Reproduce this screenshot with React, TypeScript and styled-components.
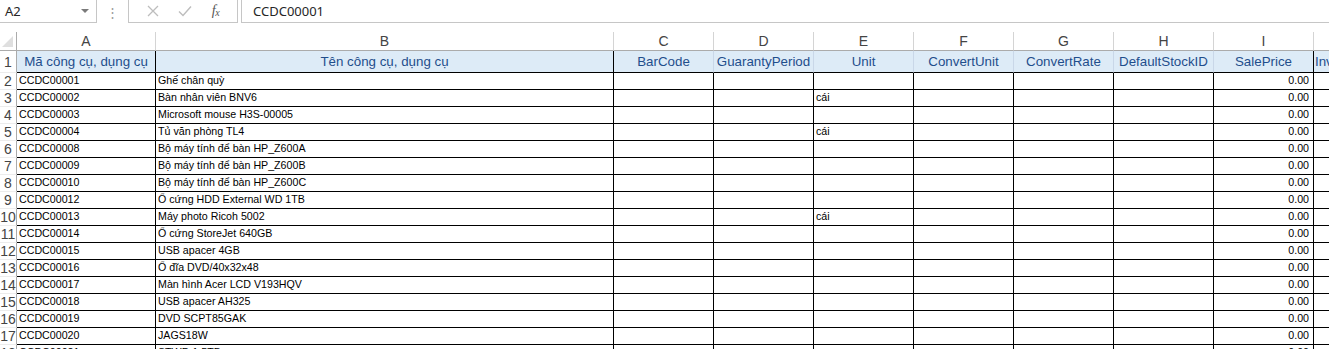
import React from "react";
import styled, { createGlobalStyle } from "styled-components";

const GlobalStyle = createGlobalStyle`
  html, body {
    margin: 0;
    padding: 0;
    background: #ffffff;
    overflow: hidden;
  }
  #root {
    width: 1329px;
    height: 349px;
    overflow: hidden;
  }
`;

const columns = ["A", "B", "C", "D", "E", "F", "G", "H", "I", "J"];
const headers = [
  "Mã công cụ, dụng cụ",
  "Tên công cụ, dụng cụ",
  "BarCode",
  "GuarantyPeriod",
  "Unit",
  "ConvertUnit",
  "ConvertRate",
  "DefaultStockID",
  "SalePrice",
  "InventoryAccount",
];

const rows: [string, string, string][] = [
  ["CCDC00001", "Ghế chân quỳ", ""],
  ["CCDC00002", "Bàn nhân viên BNV6", "cái"],
  ["CCDC00003", "Microsoft mouse H3S-00005", ""],
  ["CCDC00004", "Tủ văn phòng TL4", "cái"],
  ["CCDC00008", "Bộ máy tính để bàn HP_Z600A", ""],
  ["CCDC00009", "Bộ máy tính để bàn HP_Z600B", ""],
  ["CCDC00010", "Bộ máy tính để bàn HP_Z600C", ""],
  ["CCDC00012", "Ổ cứng HDD External WD 1TB", ""],
  ["CCDC00013", "Máy photo Ricoh 5002", "cái"],
  ["CCDC00014", "Ổ cứng StoreJet 640GB", ""],
  ["CCDC00015", "USB apacer 4GB", ""],
  ["CCDC00016", "Ổ đĩa DVD/40x32x48", ""],
  ["CCDC00017", "Màn hình Acer LCD V193HQV", ""],
  ["CCDC00018", "USB apacer AH325", ""],
  ["CCDC00019", "DVD SCPT85GAK", ""],
  ["CCDC00020", "JAGS18W", ""],
  ["CCDC00021", "STWD 1.5TB", ""],
];

const Page = styled.div`
  display: flex;
  flex-direction: column;
  gap: 9px;
  width: 1329px;
`;

const FormulaBar = styled.div`
  display: flex;
  align-items: stretch;
  height: 23px;
  font-family: "Noto Sans", "Open Sans", sans-serif;
  font-size: 13px;
  color: #262626;
`;

const NameBox = styled.div`
  width: 97px;
  display: flex;
  align-items: center;
  justify-content: space-between;
  padding: 0 6px 0 5px;
  box-sizing: border-box;
  border-right: 1px solid #c6c6c6;
  border-bottom: 1px solid #c6c6c6;
`;

const Caret = styled.span`
  width: 0;
  height: 0;
  border-left: 4px solid transparent;
  border-right: 4px solid transparent;
  border-top: 4px solid #7a7a7a;
  margin-right: 1px;
`;

const Dots = styled.div`
  width: 31px;
  display: flex;
  align-items: center;
  justify-content: center;
  color: #9a9a9a;
  font-size: 13px;
`;

const IconBox = styled.div`
  width: 110px;
  display: flex;
  align-items: center;
  justify-content: space-around;
  padding: 0 8px;
  box-sizing: border-box;
  border-left: 1px solid #c6c6c6;
  border-right: 1px solid #c6c6c6;
  border-bottom: 1px solid #c6c6c6;
`;

const Fx = styled.span`
  font-family: "Liberation Serif", "DejaVu Serif", serif;
  font-style: italic;
  font-size: 14px;
  color: #555;
  letter-spacing: -0.5px;
  sub {
    font-size: 10px;
    vertical-align: -1px;
  }
`;

const FormulaInput = styled.div`
  flex: 1;
  margin-left: 3px;
  display: flex;
  align-items: center;
  padding-left: 11px;
  border-left: 1px solid #c6c6c6;
  border-bottom: 1px solid #c6c6c6;
`;

const Sheet = styled.div`
  display: grid;
  grid-template-columns: 17px 139px 458px repeat(8, 100px);
  grid-template-rows: 19px 22px;
  grid-auto-rows: 17px;
  font-family: "Liberation Sans", Arial, sans-serif;
`;

const Corner = styled.div`
  position: relative;
  border-right: 1px solid #ababab;
  border-bottom: 1px solid #ababab;
  &::after {
    content: "";
    position: absolute;
    right: 3px;
    bottom: 3px;
    width: 0;
    height: 0;
    border-left: 11px solid transparent;
    border-bottom: 11px solid #dfdfdf;
  }
`;

const ColHead = styled.div`
  display: flex;
  align-items: center;
  justify-content: center;
  font-size: 14px;
  color: #444;
  border-right: 1px solid #d4d4d4;
  border-bottom: 1px solid #ababab;
  white-space: nowrap;
  overflow: hidden;
`;

const RowHead = styled.div`
  display: flex;
  align-items: center;
  justify-content: center;
  font-size: 14px;
  color: #444;
  border-right: 1px solid #ababab;
  border-bottom: 1px solid #ececec;
  overflow: hidden;
`;

const TitleCell = styled.div<{ $strong?: boolean; $left?: boolean }>`
  display: flex;
  align-items: center;
  justify-content: ${(p) => (p.$left ? "flex-start" : "center")};
  padding-left: ${(p) => (p.$left ? "1px" : "0")};
  background: #ddebf7;
  color: #1f4e8c;
  font-size: 13.33px;
  border-right: 1px solid ${(p) => (p.$strong ? "#000" : "#c9d7e8")};
  border-bottom: 1px solid #000;
  white-space: nowrap;
  overflow: hidden;
`;

const DataCell = styled.div<{ $right?: boolean }>`
  display: flex;
  align-items: flex-end;
  justify-content: ${(p) => (p.$right ? "flex-end" : "flex-start")};
  padding: 0 ${(p) => (p.$right ? "4px" : "0")} 2px ${(p) => (p.$right ? "0" : "2px")};
  font-size: 10.67px;
  line-height: 14px;
  color: #000;
  border-right: 1px solid #000;
  border-bottom: 1px solid #000;
  white-space: nowrap;
  overflow: hidden;
`;

const CrossIcon = () => (
  <svg width="12" height="12" viewBox="0 0 12 12">
    <path d="M1 1 L11 11 M11 1 L1 11" stroke="#bdbdbd" strokeWidth="1.3" fill="none" />
  </svg>
);

const CheckIcon = () => (
  <svg width="14" height="12" viewBox="0 0 14 12">
    <path d="M1 6.5 L5 10.5 L13 1.5" stroke="#bdbdbd" strokeWidth="1.4" fill="none" />
  </svg>
);

export default function App() {
  return (
    <>
      <GlobalStyle />
      <Page>
        <FormulaBar>
          <NameBox>
            <span>A2</span>
            <Caret />
          </NameBox>
          <Dots>⋮</Dots>
          <IconBox>
            <CrossIcon />
            <CheckIcon />
            <Fx>
              f<sub>x</sub>
            </Fx>
          </IconBox>
          <FormulaInput>CCDC00001</FormulaInput>
        </FormulaBar>
        <Sheet>
          <Corner />
          {columns.map((c) => (
            <ColHead key={c}>{c}</ColHead>
          ))}
          <RowHead>1</RowHead>
          {headers.map((h, i) => (
            <TitleCell key={h} $strong={i < 2 || i >= 8} $left={i === 9}>
              {h}
            </TitleCell>
          ))}
          {rows.map(([code, name, unit], r) => (
            <React.Fragment key={code}>
              <RowHead>{r + 2}</RowHead>
              <DataCell>{code}</DataCell>
              <DataCell>{name}</DataCell>
              <DataCell />
              <DataCell />
              <DataCell>{unit}</DataCell>
              <DataCell />
              <DataCell />
              <DataCell />
              <DataCell $right>0.00</DataCell>
              <DataCell />
            </React.Fragment>
          ))}
        </Sheet>
      </Page>
    </>
  );
}
